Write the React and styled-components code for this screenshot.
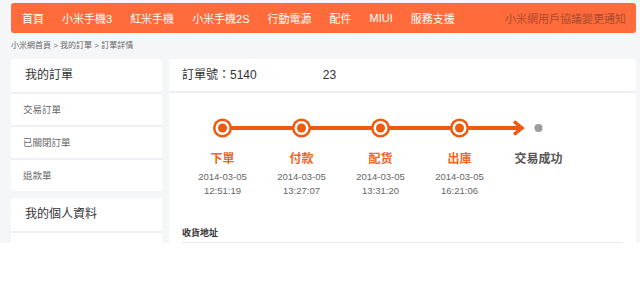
import React from "react";
import styled, { createGlobalStyle } from "styled-components";

const GlobalStyle = createGlobalStyle`
    body {
        margin: 0;
        background: #ffffff;
        font-family: "Liberation Sans", "Noto Sans CJK TC", sans-serif;
    }
`;

const navItems = ["首頁", "小米手機3", "紅米手機", "小米手機2S", "行動電源", "配件", "MIUI", "服務支援"];

const steps = [
    { label: "下單", date: "2014-03-05", time: "12:51:19" },
    { label: "付款", date: "2014-03-05", time: "13:27:07" },
    { label: "配货", date: "2014-03-05", time: "13:31:20" },
    { label: "出庫", date: "2014-03-05", time: "16:21:06" },
    { label: "交易成功", pending: true },
];

const App = () => (
    <>
        <GlobalStyle />
        <Page>
            <NavBar>
                {navItems.map((item) => (
                    <NavItem key={item}>{item}</NavItem>
                ))}
                <Notice>小米網用戶協議變更通知</Notice>
            </NavBar>
            <Breadcrumb>小米網首頁 &gt; 我的訂單 &gt; 訂單詳情</Breadcrumb>
            <Main>
                <Sidebar>
                    <SideCard>
                        <SideHeader>我的訂單</SideHeader>
                        <SideRow>交易訂單</SideRow>
                        <SideRow>已關閉訂單</SideRow>
                        <SideRow>退款單</SideRow>
                    </SideCard>
                    <SideCard>
                        <SideHeader>我的個人資料</SideHeader>
                        <SideRow />
                    </SideCard>
                </Sidebar>
                <Panel>
                    <PanelHeader>
                        訂單號：5140<OrderTail>23</OrderTail>
                    </PanelHeader>
                    <PanelBody>
                        <Track width="395" height="20" viewBox="0 0 395 20">
                            <line x1="39.5" y1="10" x2="338" y2="10" stroke="#ee5a0e" strokeWidth="4" />
                            <polyline
                                points="331,3.5 339,10 331,16.5"
                                fill="none"
                                stroke="#ee5a0e"
                                strokeWidth="3.5"
                            />
                            {[39.5, 118.5, 197.5, 276.5].map((cx) => (
                                <g key={cx}>
                                    <circle cx={cx} cy="10" r="9.5" fill="#ee5a0e" />
                                    <circle cx={cx} cy="10" r="7" fill="#ffffff" />
                                    <circle cx={cx} cy="10" r="4.5" fill="#ee5a0e" />
                                </g>
                            ))}
                            <circle cx="355.5" cy="10" r="4" fill="#9a9a9a" />
                        </Track>
                        <Steps>
                            {steps.map((s) => (
                                <Step key={s.label}>
                                    <StepLabel $pending={s.pending}>{s.label}</StepLabel>
                                    {s.date && <StepTime>{s.date}</StepTime>}
                                    {s.time && <StepTime>{s.time}</StepTime>}
                                </Step>
                            ))}
                        </Steps>
                        <SectionTitle>收貨地址</SectionTitle>
                    </PanelBody>
                </Panel>
            </Main>
        </Page>
    </>
);

export default App;

const Page = styled.div`
    height: 243px;
    overflow: hidden;
    background: #f5f6f8;
    padding: 3px 4px 0 11px;
    box-sizing: border-box;
`;

const NavBar = styled.nav`
    display: flex;
    align-items: center;
    gap: 18px;
    height: 30px;
    padding: 0 10px 0 11px;
    background: #ff6b3b;
    border-radius: 3px;
`;

const NavItem = styled.span`
    color: #ffffff;
    font-size: 11px;
`;

const Notice = styled.span`
    margin-left: auto;
    color: #a84c2e;
    font-size: 11px;
`;

const Breadcrumb = styled.div`
    height: 26px;
    line-height: 26px;
    font-size: 8px;
    color: #666666;
`;

const Main = styled.div`
    display: flex;
    gap: 7px;
    align-items: flex-start;
`;

const Sidebar = styled.div`
    width: 151px;
    display: flex;
    flex-direction: column;
    gap: 7px;
`;

const SideCard = styled.div`
    background: #ffffff;
    border-radius: 3px;
`;

const SideHeader = styled.div`
    height: 33px;
    line-height: 33px;
    padding-left: 14px;
    font-size: 12px;
    color: #333333;
`;

const SideRow = styled.div`
    height: 31px;
    line-height: 31px;
    padding-left: 12px;
    border-top: 2px solid #eff0f3;
    font-size: 9.5px;
    color: #666666;
`;

const Panel = styled.div`
    flex: 1;
    background: #ffffff;
    border-radius: 3px;
    height: 260px;
`;

const PanelHeader = styled.div`
    height: 32px;
    line-height: 32px;
    padding-left: 13px;
    font-size: 12px;
    color: #333333;
    border-bottom: 2px solid #eff0f3;
`;

const OrderTail = styled.span`
    margin-left: 66px;
`;

const PanelBody = styled.div`
    padding: 25px 13px 0;
`;

const Track = styled.svg`
    display: block;
    margin-left: 1px;
`;

const Steps = styled.div`
    display: grid;
    grid-template-columns: repeat(5, 79px);
    margin: 13px 0 0 1px;
`;

const Step = styled.div`
    display: flex;
    flex-direction: column;
    align-items: center;
`;

const StepLabel = styled.div`
    font-size: 12px;
    line-height: 16px;
    font-weight: bold;
    color: ${(p) => (p.$pending ? "#555555" : "#f2651a")};
    margin-bottom: 3px;
`;

const StepTime = styled.div`
    font-size: 9.5px;
    line-height: 14px;
    color: #666666;
`;

const SectionTitle = styled.div`
    margin-top: 29px;
    font-size: 9px;
    line-height: 12px;
    font-weight: bold;
    color: #333333;
    padding-bottom: 3px;
    border-bottom: 2px solid #ececec;
`;
